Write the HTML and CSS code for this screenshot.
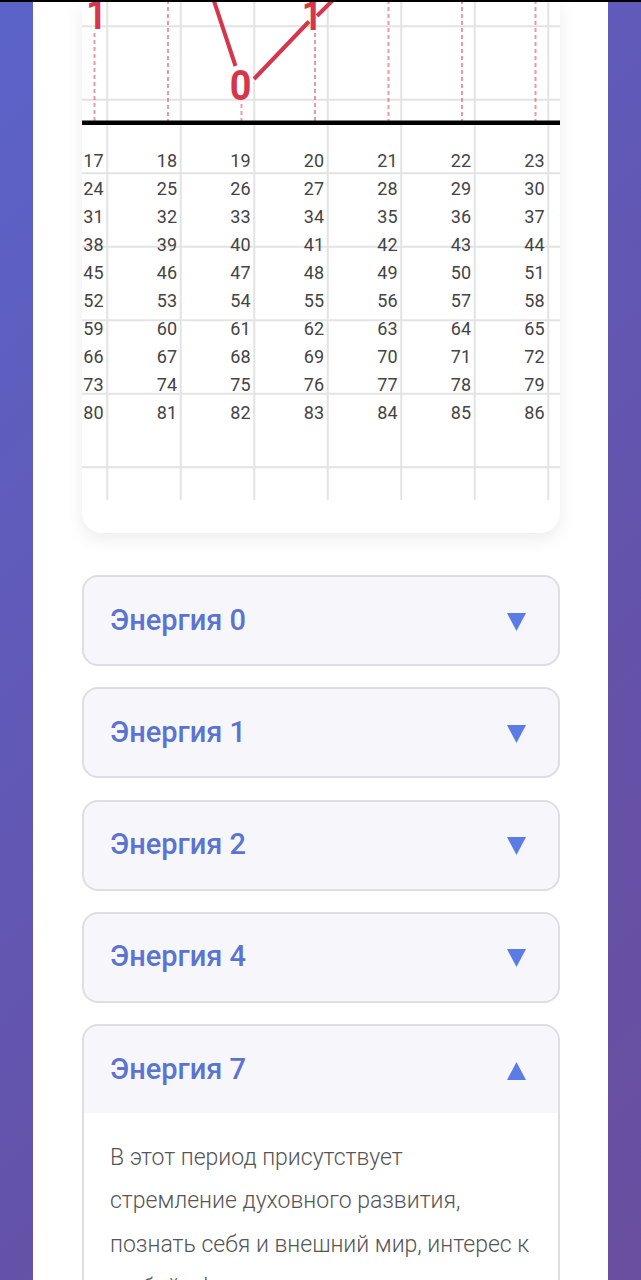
FILE: index.html
```html
<!DOCTYPE html>
<html lang="ru">
<head>
<meta charset="utf-8">
<title>Энергии</title>
<link rel="stylesheet" href="styles.css">
</head>
<body>
<div class="topbar"></div>
<main class="page">
  <section class="chart-card">
    <div class="grid">
      <svg class="chart" width="478" height="147" viewBox="0 0 478 147">
        <g class="dash">
          <line x1="12.5" y1="33" x2="12.5" y2="121"/>
          <line x1="86" y1="0" x2="86" y2="121"/>
          <line x1="159.5" y1="104" x2="159.5" y2="121"/>
          <line x1="233" y1="33" x2="233" y2="121"/>
          <line x1="306.5" y1="0" x2="306.5" y2="121"/>
          <line x1="380" y1="0" x2="380" y2="121"/>
          <line x1="453.5" y1="0" x2="453.5" y2="121"/>
        </g>
        <rect class="axis" x="0" y="120.5" width="478" height="4.5"/>
        <g class="curve">
          <line x1="131" y1="-2" x2="153.5" y2="66"/>
          <line x1="172" y1="79" x2="227" y2="21.5"/>
          <line x1="235" y1="16" x2="253" y2="-2"/>
        </g>
        <text class="val" transform="translate(14.5 28.5) scale(0.85 1)">1</text>
        <text class="val" transform="translate(158.5 100) scale(0.9 1.03)">0</text>
        <text class="val" transform="translate(230 29.5) scale(0.85 1)">1</text>
      </svg>
      <div class="numbers">
        <span>17</span><span>18</span><span>19</span><span>20</span><span>21</span><span>22</span><span>23</span>
        <span>24</span><span>25</span><span>26</span><span>27</span><span>28</span><span>29</span><span>30</span>
        <span>31</span><span>32</span><span>33</span><span>34</span><span>35</span><span>36</span><span>37</span>
        <span>38</span><span>39</span><span>40</span><span>41</span><span>42</span><span>43</span><span>44</span>
        <span>45</span><span>46</span><span>47</span><span>48</span><span>49</span><span>50</span><span>51</span>
        <span>52</span><span>53</span><span>54</span><span>55</span><span>56</span><span>57</span><span>58</span>
        <span>59</span><span>60</span><span>61</span><span>62</span><span>63</span><span>64</span><span>65</span>
        <span>66</span><span>67</span><span>68</span><span>69</span><span>70</span><span>71</span><span>72</span>
        <span>73</span><span>74</span><span>75</span><span>76</span><span>77</span><span>78</span><span>79</span>
        <span>80</span><span>81</span><span>82</span><span>83</span><span>84</span><span>85</span><span>86</span>
      </div>
    </div>
  </section>

  <section class="accordion">
    <div class="acc-item">
      <div class="acc-head">
        <span class="acc-title">Энергия 0</span>
        <svg class="acc-arrow" viewBox="0 0 19 18"><polygon points="0,0 19,0 9.5,18"/></svg>
      </div>
    </div>
    <div class="acc-item">
      <div class="acc-head">
        <span class="acc-title">Энергия 1</span>
        <svg class="acc-arrow" viewBox="0 0 19 18"><polygon points="0,0 19,0 9.5,18"/></svg>
      </div>
    </div>
    <div class="acc-item">
      <div class="acc-head">
        <span class="acc-title">Энергия 2</span>
        <svg class="acc-arrow" viewBox="0 0 19 18"><polygon points="0,0 19,0 9.5,18"/></svg>
      </div>
    </div>
    <div class="acc-item">
      <div class="acc-head">
        <span class="acc-title">Энергия 4</span>
        <svg class="acc-arrow" viewBox="0 0 19 18"><polygon points="0,0 19,0 9.5,18"/></svg>
      </div>
    </div>
    <div class="acc-item open">
      <div class="acc-head">
        <span class="acc-title">Энергия 7</span>
        <svg class="acc-arrow" viewBox="0 0 19 18"><polygon points="9.5,0 19,18 0,18"/></svg>
      </div>
      <div class="acc-body">
        В этот период присутствует стремление духовного развития, познать себя и внешний мир, интерес к любой сфере: эзотерика, наука, религия, философия. Человек ищет ответы на глубокие вопросы и учится доверять своей интуиции.
      </div>
    </div>
  </section>
</main>
</body>
</html>
```

FILE: styles.css
```css
* {
  box-sizing: border-box;
}

html,
body {
  margin: 0;
  padding: 0;
}

body {
  min-height: 1280px;
  background: linear-gradient(135deg, #5b63c9 0%, #6452a9 60%, #6b4d9b 100%);
  font-family: Roboto, "Noto Sans", "Liberation Sans", sans-serif;
}

.topbar {
  position: fixed;
  top: 0;
  left: 0;
  right: 0;
  height: 2px;
  background: #000;
  z-index: 10;
}

.page {
  margin: 0 33px;
  padding: 0 48px 0 49px;
  min-height: 1280px;
  background: #fff;
}

.chart-card {
  background: #fff;
  border-radius: 0 0 20px 20px;
  box-shadow: 0 6px 18px rgba(0, 0, 0, 0.08);
  padding-bottom: 33px;
  overflow: hidden;
}

.grid {
  height: 500px;
  background-image:
    linear-gradient(to right, #e3e3e3 1.5px, transparent 1.5px),
    linear-gradient(to bottom, #e3e3e3 1.5px, transparent 1.5px);
  background-size: 73.5px 73.5px;
  background-position: 24.25px 25.25px;
}

.chart {
  display: block;
}

.dash line {
  stroke: rgba(214, 54, 74, 0.5);
  stroke-width: 2;
  stroke-dasharray: 4 3;
}

.axis {
  fill: #000;
}

.curve line {
  stroke: #d5364b;
  stroke-width: 4;
}

.val {
  font-family: Roboto, "Liberation Sans", sans-serif;
  font-weight: 700;
  font-size: 42px;
  fill: #d5364b;
  text-anchor: middle;
}

.numbers {
  display: grid;
  grid-template-columns: 25px repeat(6, 73.5px);
  font-size: 18px;
  line-height: 28px;
  color: #444;
}

.numbers span {
  text-align: right;
  padding-right: 3.5px;
}

.accordion {
  padding-top: 42px;
  display: flex;
  flex-direction: column;
  gap: 21.25px;
}

.acc-item {
  border: 2px solid #dddde3;
  border-radius: 16px;
  background: #f7f7fb;
  overflow: hidden;
}

.acc-head {
  height: 87px;
  display: flex;
  align-items: center;
  justify-content: space-between;
  padding: 0 32px 2px 26px;
}

.acc-title {
  font-size: 29px;
  font-weight: 500;
  color: #5b74d1;
}

.acc-arrow {
  width: 19px;
  height: 18px;
  margin-top: 4px;
  fill: #5b7be6;
}

.acc-body {
  background: #fff;
  padding: 23px 26px 30px;
  font-size: 23px;
  font-weight: 300;
  line-height: 43.3px;
  color: #555;
}
```
